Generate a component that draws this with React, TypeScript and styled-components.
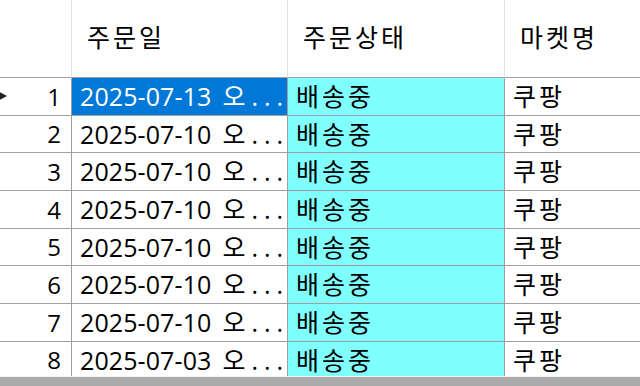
import React from "react";
import styled, { createGlobalStyle } from "styled-components";

// 주문 목록 (DataGridView 모양)
interface OrderRow {
  no: number;
  orderDate: string;
  status: string;
  market: string;
}

const rows: OrderRow[] = [
  { no: 1, orderDate: "2025-07-13 오...", status: "배송중", market: "쿠팡" },
  { no: 2, orderDate: "2025-07-10 오...", status: "배송중", market: "쿠팡" },
  { no: 3, orderDate: "2025-07-10 오...", status: "배송중", market: "쿠팡" },
  { no: 4, orderDate: "2025-07-10 오...", status: "배송중", market: "쿠팡" },
  { no: 5, orderDate: "2025-07-10 오...", status: "배송중", market: "쿠팡" },
  { no: 6, orderDate: "2025-07-10 오...", status: "배송중", market: "쿠팡" },
  { no: 7, orderDate: "2025-07-10 오...", status: "배송중", market: "쿠팡" },
  { no: 8, orderDate: "2025-07-03 오...", status: "배송중", market: "쿠팡" },
];

const selectedRow = 1;

// 날짜 부분과 잘린 꼬리("오...") 분리
const splitDate = (value: string) => {
  const idx = value.indexOf(" ");
  return idx < 0 ? [value, ""] : [value.slice(0, idx), value.slice(idx + 1)];
};

export default function App() {
  return (
    <>
      <GlobalStyle />
      <GridView>
        <Grid>
          <Corner />
          <HeaderCell>주문일</HeaderCell>
          <HeaderCell>주문상태</HeaderCell>
          <HeaderCell $last>마켓명</HeaderCell>

          {rows.map((row) => {
            const [date, tail] = splitDate(row.orderDate);
            return (
              <React.Fragment key={row.no}>
                <RowHeader>
                  {row.no === selectedRow && <Pointer />}
                  {row.no}
                </RowHeader>
                <Cell $selected={row.no === selectedRow}>
                  {date} <Tail>{tail}</Tail>
                </Cell>
                <Cell $status $hangul>{row.status}</Cell>
                <Cell $hangul $last>{row.market}</Cell>
              </React.Fragment>
            );
          })}
        </Grid>
      </GridView>
      <Workspace />
    </>
  );
}

const GlobalStyle = createGlobalStyle`
  html, body {
    margin: 0;
    padding: 0;
    background: #ababab;
    overflow: hidden;
  }
  body {
    width: 640px;
    height: 386px;
    font-family: "Open Sans", "Noto Sans CJK KR", sans-serif;
    color: #000;
  }
`;

const GridView = styled.div`
  width: 640px;
  height: 376px;
  overflow: hidden;
  background: #fff;
`;

const Grid = styled.div`
  display: grid;
  grid-template-columns: 72px 216px 217px 1fr;
  grid-template-rows: 78px;
  grid-auto-rows: 37.7px;
`;

const Corner = styled.div`
  border-right: 1px solid #e3e3e3;
  border-bottom: 1px solid #a0a0a0;
`;

const HeaderCell = styled.div<{ $last?: boolean }>`
  display: flex;
  align-items: center;
  padding: 0 0 6px 15px;
  font-family: "Noto Sans CJK KR", sans-serif;
  font-size: 25px;
  letter-spacing: 3px;
  border-right: ${(p) => (p.$last ? "none" : "1px solid #e3e3e3")};
  border-bottom: 1px solid #a0a0a0;
  white-space: nowrap;
`;

const RowHeader = styled.div`
  position: relative;
  display: flex;
  align-items: center;
  justify-content: flex-end;
  padding-right: 10px;
  font-size: 24px;
  line-height: 1.15;
  border-right: 1px solid #a0a0a0;
  border-bottom: 1px solid #a0a0a0;
`;

const Pointer = styled.span`
  position: absolute;
  left: -4px;
  top: 50%;
  margin-top: -6px;
  width: 0;
  height: 0;
  border-top: 6px solid transparent;
  border-bottom: 6px solid transparent;
  border-left: 11px solid #202020;
`;

const Cell = styled.div<{ $selected?: boolean; $status?: boolean; $hangul?: boolean; $last?: boolean }>`
  display: flex;
  align-items: center;
  gap: 11px;
  padding-left: 8px;
  font-size: 25px;
  line-height: 1.15;
  letter-spacing: ${(p) => (p.$hangul ? "3px" : "0.1px")};
  white-space: nowrap;
  overflow: hidden;
  border-right: ${(p) => (p.$last ? "none" : "1px solid #a0a0a0")};
  border-bottom: 1px solid #a0a0a0;
  background: ${(p) => (p.$selected ? "#0078d7" : p.$status ? "#80ffff" : "#fff")};
  color: ${(p) => (p.$selected ? "#fff" : "#000")};
`;

const Tail = styled.span`
  letter-spacing: 6px;
`;

const Workspace = styled.div`
  height: 10px;
  border-top: 1px solid #f0f0f0;
  background: #ababab;
`;
